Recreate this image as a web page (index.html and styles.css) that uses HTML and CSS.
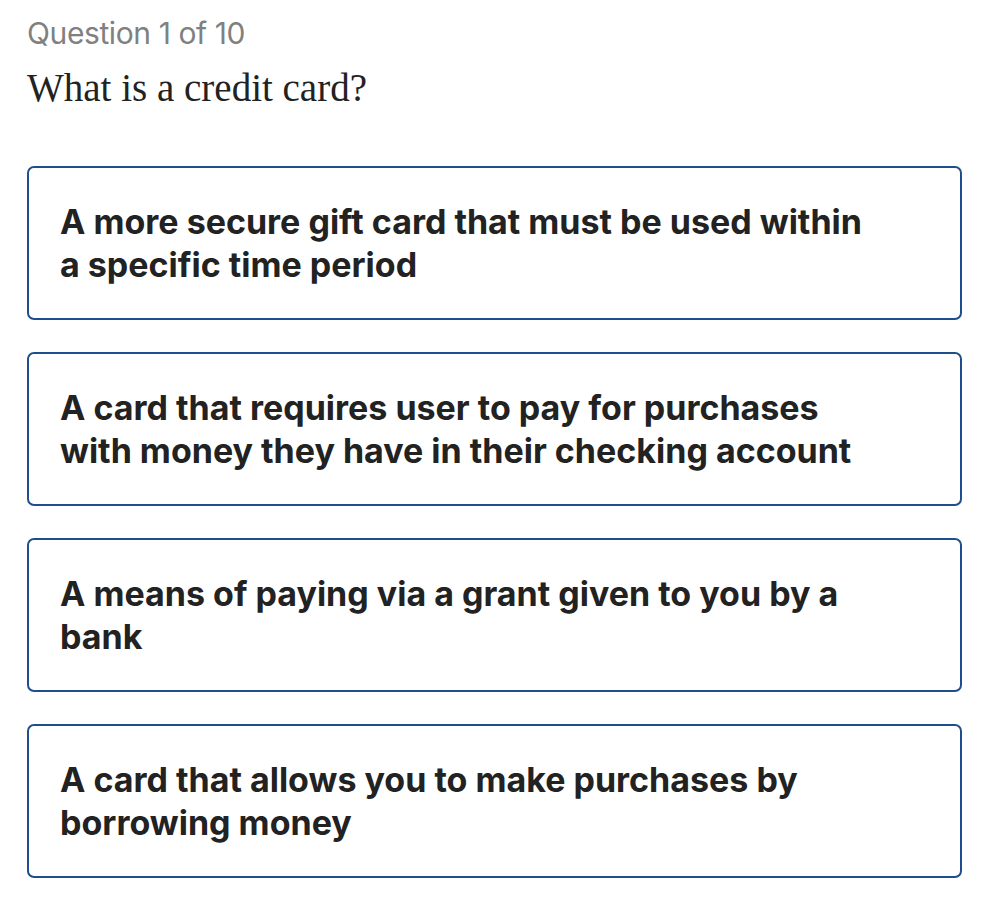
FILE: index.html
```html
<!DOCTYPE html>
<html lang="en">
<head>
    <meta charset="UTF-8">
    <meta name="viewport" content="width=device-width, initial-scale=1.0">
    <title>Quiz</title>
    <link rel="stylesheet" href="styles.css">
</head>
<body>

    <div class="quiz">
        <p class="counter">Question 1 of 10</p>
        <h1 class="question">What is a credit card?</h1>

        <div class="answers">
            <button class="answer">A more secure gift card that must be used within a specific time period</button>
            <button class="answer">A card that requires user to pay for purchases with money they have in their checking account</button>
            <button class="answer">A means of paying via a grant given to you by a bank</button>
            <button class="answer">A card that allows you to make purchases by borrowing money</button>
        </div>
    </div>

</body>
</html>
```

FILE: styles.css
```css
/* Reset */
* {
    margin: 0;
    padding: 0;
    box-sizing: border-box;
}

body {
    background: #fff;
    color: #222;
    font-family: Inter, 'Liberation Sans', sans-serif;
}

.quiz {
    padding: 13px 28px 0 27px;
}

/* Encabezado */
.counter {
    font-size: 30px;
    line-height: 40px;
    color: #808080;
    letter-spacing: -0.4px;
}

.question {
    margin-top: 15px;
    font-family: 'Liberation Serif', 'DejaVu Serif', serif;
    font-weight: normal;
    font-size: 39px;
    line-height: 40px;
    color: #222;
}

/* Respuestas */
.answers {
    margin-top: 58px;
    display: flex;
    flex-direction: column;
    gap: 32px;
}

.answer {
    display: block;
    width: 100%;
    height: 154px;
    padding: 0 80px 0 31px;
    text-align: left;
    background: #fff;
    border: 2px solid #1f4e8c;
    border-radius: 7px;
    font-family: Inter, 'Liberation Sans', sans-serif;
    font-weight: bold;
    font-size: 34px;
    line-height: 43px;
    letter-spacing: 0;
    color: #222;
    cursor: pointer;
}
```
